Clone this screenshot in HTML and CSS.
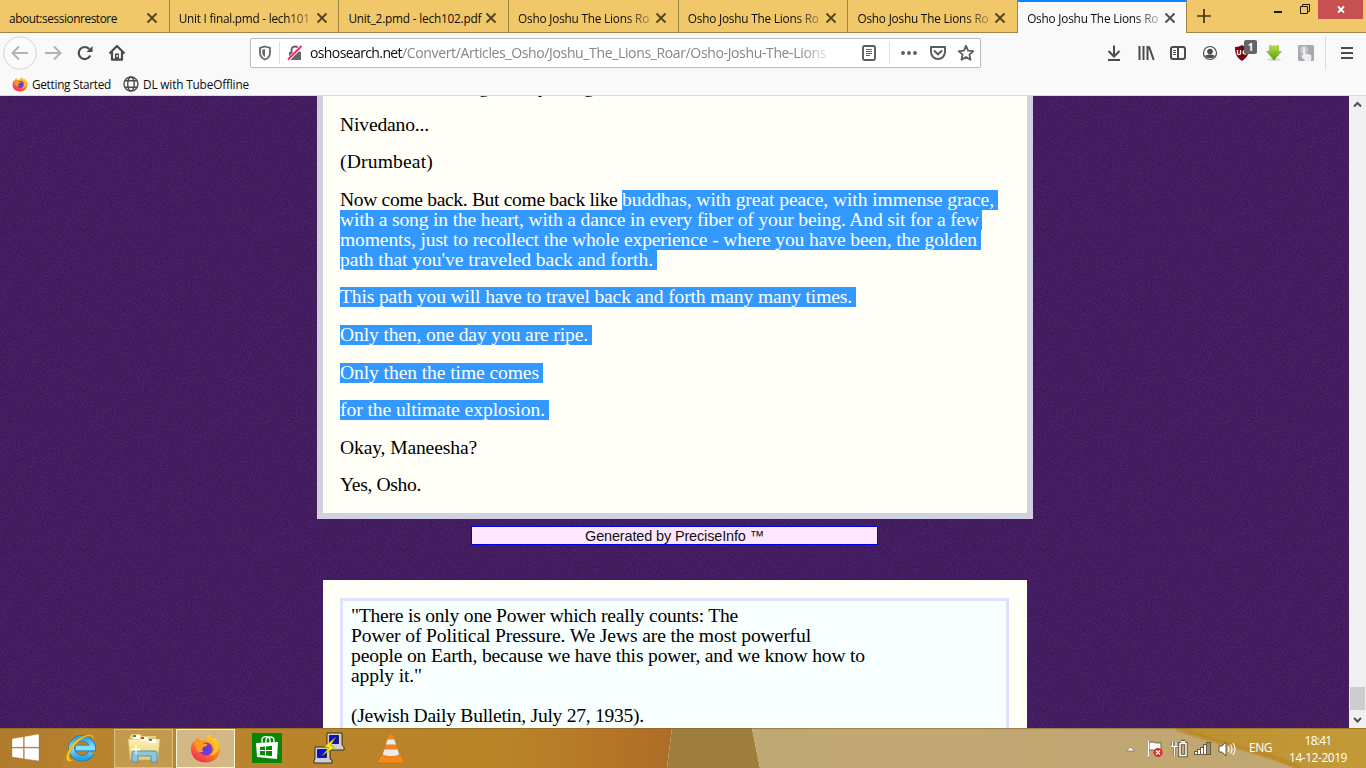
FILE: index.html
```html
<!DOCTYPE html>
<html lang="en">
<head>
<meta charset="utf-8">
<title>Osho Joshu The Lions Roar</title>
<link rel="stylesheet" href="styles.css">
</head>
<body>
<svg class="defs" width="0" height="0">
  <defs>
    <linearGradient id="ff" x1="0.8" y1="0" x2="0.2" y2="1"><stop offset="0" stop-color="#ffe52e"/><stop offset=".45" stop-color="#ff8a1c"/><stop offset="1" stop-color="#f0245c"/></linearGradient>
    <radialGradient id="globe"><stop offset="0" stop-color="#5a3fd8"/><stop offset="1" stop-color="#8a35c8"/></radialGradient>
    <linearGradient id="ie" x1="0" y1="0" x2="0" y2="1"><stop offset="0" stop-color="#2fa4e4"/><stop offset=".5" stop-color="#8fe4ff"/><stop offset="1" stop-color="#2b9ee0"/></linearGradient>
    <linearGradient id="folder" x1="0" y1="0" x2="0" y2="1"><stop offset="0" stop-color="#fdf3b4"/><stop offset="1" stop-color="#e6cd74"/></linearGradient>
    <linearGradient id="green" x1="0" y1="0" x2="0" y2="1"><stop offset="0" stop-color="#b4e04a"/><stop offset="1" stop-color="#5c9a10"/></linearGradient>
    <symbol id="x" viewBox="0 0 16 16"><path d="M3.5 3.5l9 9M12.500 3.500l-9 9" stroke="currentColor" stroke-width="1.800" fill="none"/></symbol>
    <symbol id="firefox" viewBox="0 0 32 32">
      <path d="M20 1c0 3 2 4 4 6 1-1 1-2 1-2 4 3 6 8 6 12 0 8-6 14-15 14S1 25 1 17c0-4 2-7 3-9 0 1 0 2 1 2 1-3 2-5 4-6 0 3 1 4 3 4 3-1 6-2 8-7z" fill="url(#ff)"/>
      <circle cx="16.500" cy="17" r="6.800" fill="url(#globe)"/>
      <path d="M5 11c3-2 6-2 8 0l5 1c-1 3-4 2-5 4-1 2 0 3 1 4-4 1-8-1-8-5z" fill="#ff9a20"/>
      <path d="M20 1c0 5 5 7 5 13 1 5-2 8-5 9 6 1 10-4 9-9-1-4-3-4-5-6-2-2-4-4-4-7z" fill="#ffc428"/>
    </symbol>
  </defs>
</svg>

<header class="tabs">
  <div class="tab"><span class="tab-title"><span data-w="108">about:sessionrestore</span></span><svg class="close"><use href="#x"/></svg></div>
  <div class="tab"><span class="tab-title fade"><span data-w="131">Unit I final.pmd - lech101</span></span><svg class="close"><use href="#x"/></svg></div>
  <div class="tab"><span class="tab-title"><span data-w="133">Unit_2.pmd - lech102.pdf</span></span><svg class="close"><use href="#x"/></svg></div>
  <div class="tab"><span class="tab-title fade"><span data-w="131">Osho Joshu The Lions Ro</span></span><svg class="close"><use href="#x"/></svg></div>
  <div class="tab"><span class="tab-title fade"><span data-w="131">Osho Joshu The Lions Ro</span></span><svg class="close"><use href="#x"/></svg></div>
  <div class="tab"><span class="tab-title fade"><span data-w="131">Osho Joshu The Lions Ro</span></span><svg class="close"><use href="#x"/></svg></div>
  <div class="tab active"><span class="tab-title fade"><span data-w="131">Osho Joshu The Lions Ro</span></span><svg class="close"><use href="#x"/></svg></div>
  <svg class="plus" width="34" height="32"><path d="M17 9v14M10 16h14" stroke="#40351c" stroke-width="1.700"/></svg>
  <div class="window-controls">
    <svg width="32" height="19"><path d="M12 12h8" stroke="#1c1710" stroke-width="2"/></svg>
    <svg width="24" height="19"><path d="M6.500 6.500h7v7h-7zM8.500 6V4.500h7v7H14" fill="none" stroke="#1c1710"/></svg>
    <span class="win-close"><svg width="45" height="19"><path d="M20 6.500l6 6M26 6.500l-6 6" stroke="#fff" stroke-width="1.800"/></svg></span>
  </div>
</header>

<nav class="toolbar">
  <svg class="back" width="34" height="34" viewBox="0 0 34 34"><circle cx="17" cy="17" r="16.300" fill="#fbfbfb" stroke="#d3d3d4"/><path d="M25 17H10M16 10.500L9.500 17l6.500 6.500" fill="none" stroke="#b3b3b5" stroke-width="2"/></svg>
  <svg class="btn" viewBox="0 0 32 32"><path d="M8 16h15M17 9.500l6.500 6.500-6.500 6.500" fill="none" stroke="#b3b3b5" stroke-width="2"/></svg>
  <svg class="btn" viewBox="0 0 32 32"><path d="M21.200 18.500a6 6 0 1 1-1-6.500" fill="none" stroke="#4a4a4f" stroke-width="2.200"/><path d="M23.500 9v6h-6z" fill="#4a4a4f"/></svg>
  <svg class="btn" viewBox="0 0 32 32"><path d="M8.500 16.500L16 9l7.500 7.500M11 15v7.700h10V15" fill="none" stroke="#4a4a4f" stroke-width="2.200" stroke-linejoin="round"/><path d="M14 16.500h4V23h-4z" fill="#4a4a4f"/><path d="M15.500 18h1.500v2h-1.500z" fill="#fff"/></svg>
  <div class="urlbar">
    <svg class="shield" width="16" height="18" viewBox="0 0 16 18"><path d="M8 2.500l5 1.500v5c0 3-2.500 5.500-5 6.500-2.500-1-5-3.500-5-6.500V4z" fill="none" stroke="#66666a" stroke-width="1.800"/><path d="M8 5v8C6 12 5.300 10 5.300 9V5.700z" fill="#66666a"/></svg>
    <i class="rule"></i>
    <svg class="lock" width="16" height="16" viewBox="0 0 16 16"><path d="M2 7h12v8H2z" fill="#66666a"/><path d="M4.500 8V5a3.500 3.500 0 0 1 7 0v3" fill="none" stroke="#66666a" stroke-width="2"/><path d="M1 15L14.500 1" stroke="#fff" stroke-width="3.400"/><path d="M1 14.500L14.500 1" stroke="#ff2256" stroke-width="1.800"/></svg>
    <span class="url"><span data-w="92" class="host">oshosearch.net</span><span data-w="424">/Convert/Articles_Osho/Joshu_The_Lions_Roar/Osho-Joshu-The-Lions</span></span>
    <svg class="reader" width="16" height="18" viewBox="0 0 16 18"><rect x="2" y="2" width="12" height="14" rx="1.500" fill="none" stroke="#5c5c61" stroke-width="1.900"/><path d="M5 5.500h6M5 7.500h6M5 9.500h6M5 11.500h4" stroke="#5c5c61"/></svg>
    <i class="rule"></i>
    <svg class="dots" width="18" height="16"><g fill="#5c5c61"><circle cx="3" cy="8" r="1.900"/><circle cx="9" cy="8" r="1.900"/><circle cx="15" cy="8" r="1.900"/></g></svg>
    <svg class="pocket" width="18" height="16" viewBox="0 0 18 16"><path d="M2 2h14v5a7 7 0 0 1-14 0z" fill="none" stroke="#5c5c61" stroke-width="2" stroke-linejoin="round"/><path d="M5.500 6L9 9.300 12.500 6" fill="none" stroke="#5c5c61" stroke-width="2" stroke-linecap="round"/></svg>
    <svg class="star" width="18" height="18" viewBox="0 0 18 18"><path d="M9 1.800l2.100 4.800 5.200.5-3.900 3.500 1.100 5.200L9 13.100l-4.500 2.700 1.100-5.200-3.900-3.500 5.200-.5z" fill="none" stroke="#5c5c61" stroke-width="1.800" stroke-linejoin="round"/></svg>
  </div>
  <div class="actions">
    <svg class="btn" viewBox="0 0 32 32"><path d="M16 8.500v10.500M10.500 14l5.500 5.500 5.500-5.500M10 23h12" fill="none" stroke="#4a4a4f" stroke-width="2"/></svg>
    <svg class="btn" viewBox="0 0 32 32"><path d="M9.500 9v14M13.500 9v14M17.500 9v14M19 9.500l4.700 13.500" fill="none" stroke="#4a4a4f" stroke-width="2"/></svg>
    <svg class="btn" viewBox="0 0 32 32"><rect x="9" y="10" width="14" height="12" rx="2" fill="none" stroke="#4a4a4f" stroke-width="2"/><path d="M16 10v12" stroke="#4a4a4f" stroke-width="2"/><path d="M11 13.500h3M11 15.500h3M11 17.500h3" stroke="#4a4a4f"/></svg>
    <svg class="btn" viewBox="0 0 32 32"><circle cx="16" cy="16" r="6.500" fill="none" stroke="#4a4a4f" stroke-width="1.200"/><circle cx="16" cy="14.500" r="2.800" fill="#4a4a4f"/><path d="M11 19c2-2 8-2 10 0-2 3-8 3-10 0z" fill="#4a4a4f"/></svg>
    <div class="ublock"><svg class="btn" viewBox="0 0 32 32"><path d="M16 8c2 1.500 5 2 7 2 0 6-1 10-7 14-6-4-7-8-7-14 2 0 5-.5 7-2z" fill="#800010"/><path d="M11.500 13v3.500c0 1.500 3 1.500 3 0V13M20 13.500c-3-1-4.500 4 0 3.500" fill="none" stroke="#fff" stroke-width="1.300"/></svg><b class="badge">1</b></div>
    <svg class="btn" viewBox="0 0 32 32"><ellipse cx="16" cy="22.500" rx="7" ry="1.500" fill="#d5dccb"/><path d="M11 8h2.500l.8 1.500L15 8h2l.7 1.500.8-1.500H21v6h3l-8 9.500L8 14h3z" fill="url(#green)"/></svg>
    <svg class="btn" viewBox="0 0 32 32"><rect x="8" y="8" width="16" height="16" rx="1.500" fill="#a9a9a9"/><circle cx="14" cy="13" r="4" fill="#c8c8c8"/><path d="M13 10.500c1.500-1 2 0 2 1v5l5 1c2 1 1.500 4 1 6.500h-6l-4-5c0-1 2-1 2 0z" fill="#e9eff4"/></svg>
  </div>
  <i class="rule tall"></i>
  <svg class="menu" width="14" height="16"><path d="M1 3h12M1 8h12M1 13h12" stroke="#4a4a4f" stroke-width="2"/></svg>
</nav>

<div class="bookmarks">
  <svg class="bm-fox" width="16" height="16"><use href="#firefox"/></svg><span data-w="79">Getting Started</span>
  <svg class="bm-globe" width="16" height="16" viewBox="0 0 16 16"><g fill="none" stroke="#4a4a4f" stroke-width="1.400"><circle cx="8" cy="8" r="7"/><ellipse cx="8" cy="8" rx="3.300" ry="7"/><path d="M2 4.800h12M2 11.200h12"/></g></svg><span data-w="106">DL with TubeOffline</span>
</div>

<main class="viewport">
  <div class="page">
    <svg class="noise" width="1349" height="632"><filter id="grain" x="0" y="0" width="100%" height="100%" color-interpolation-filters="sRGB"><feTurbulence type="fractalNoise" baseFrequency=".8" numOctaves="2" seed="4"/><feColorMatrix values=".16 .06 0 0 .157  .08 .05 0 0 .048  .14 .05 .08 0 .243  0 0 0 0 1"/></filter><rect width="100%" height="100%" filter="url(#grain)"/></svg>
    <article class="article">
      <p class="cut"><span>g</span><span>y</span><span>g</span></p>
      <p><span data-w="89">Nivedano...</span></p>
      <p><span data-w="93">(Drumbeat)</span></p>
      <p><span data-w="282">Now come back. But come back like </span><mark data-w="372">buddhas, with great peace, with immense grace,</mark><br>
      <mark class="tight" data-w="639">with a song in the heart, with a dance in every fiber of your being. And sit for a few</mark><br>
      <mark data-w="637">moments, just to recollect the whole experience - where you have been, the golden</mark><br>
      <mark data-w="313">path that you've traveled back and forth.</mark></p>
      <p><mark data-w="512">This path you will have to travel back and forth many many times.</mark></p>
      <p><mark data-w="248">Only then, one day you are ripe.</mark></p>
      <p><mark data-w="199">Only then the time comes</mark></p>
      <p><mark data-w="205">for the ultimate explosion.</mark></p>
      <p><span data-w="137">Okay, Maneesha?</span></p>
      <p><span data-w="81">Yes, Osho.</span></p>
    </article>
    <div class="generated"><span data-w="179">Generated by PreciseInfo ™</span></div>
    <section class="quote-card">
      <div class="quote">
        <span data-w="387">"There is only one Power which really counts: The</span><br>
        <span data-w="460">Power of Political Pressure. We Jews are the most powerful</span><br>
        <span data-w="514">people on Earth, because we have this power, and we know how to</span><br>
        <span data-w="71">apply it."</span><br><br>
        <span data-w="293">(Jewish Daily Bulletin, July 27, 1935).</span>
      </div>
    </section>
  </div>
  <div class="scrollbar">
    <svg width="17" height="17"><path d="M5 10.500l3.500-3.500 3.500 3.500" fill="none" stroke="#505050" stroke-width="2"/></svg>
    <i class="thumb"></i>
    <svg width="17" height="17"><path d="M5 7l3.500 3.500L12 7" fill="none" stroke="#505050" stroke-width="2"/></svg>
  </div>
</main>

<footer class="taskbar">
  <svg class="wallpaper" width="1366" height="40">
    <defs>
      <linearGradient id="w1"><stop offset="0" stop-color="#b47f2c"/><stop offset=".09" stop-color="#b9842e"/><stop offset=".75" stop-color="#b98428"/><stop offset=".86" stop-color="#b77a27"/><stop offset="1" stop-color="#ae6d27"/></linearGradient>
      <linearGradient id="w2"><stop offset="0" stop-color="#c0a875"/><stop offset="1" stop-color="#c1a670"/></linearGradient>
      <linearGradient id="w3"><stop offset="0" stop-color="#bd9030"/><stop offset="1" stop-color="#c39a39"/></linearGradient>
    </defs>
    <path d="M0 0h672l-5 40H0z" fill="url(#w1)"/>
    <path d="M0 0h74L60 40H0z" fill="#a9752a" opacity=".35"/>
    <path d="M672 0h80l8 40h-93z" fill="#9d7e3c"/>
    <path d="M752 0h614v40H760z" fill="url(#w2)"/>
    <path d="M1176 0h190v40h-72c-28-15-72-23-118-40z" fill="url(#w3)"/>
    <path d="M1176 0c40 16 92 24 124 40" fill="none" stroke="#b9851f" stroke-width="5" opacity=".6"/>
    <path d="M0 .5h1366" stroke="#806020" opacity=".5"/>
  </svg>
  <div class="apps">
    <svg class="start" width="28" height="28" viewBox="0 0 28 28"><path d="M0 4.500L11.500 2.700v10.600H0zM12.300 2.600L27 0v13.300H12.300zM0 14.100h11.500v10.700L0 23zM12.300 14.100H27V27l-14.700-2.100z" fill="#fff" stroke="#9a7434" stroke-width=".4"/></svg>
    <svg class="ie" width="32" height="32" viewBox="0 0 32 32"><path d="M26.500 20.500A10.500 10 0 1 1 27.500 16H11" fill="none" stroke="#1e79bb" stroke-width="6.500"/><path d="M26.500 20.500A10.500 10 0 1 1 27.500 16H11" fill="none" stroke="url(#ie)" stroke-width="5"/><path d="M28.500 8C31-1 15 2 7 13S-1 33 9 28C0 29 5 18 12 11S27 1 28.500 8z" fill="#fbc81f" stroke="#c98a10" stroke-width=".5"/></svg>
    <div class="task"><svg width="34" height="32" viewBox="0 0 34 32"><path d="M3 4l2-2h8l2 2h14v20H3z" fill="#e9d287"/><path d="M1 7h32l-2 21H3z" fill="url(#folder)" stroke="#c2a44b" stroke-width=".6"/><path d="M6 3h7v4H6zM14 5h7v4h-7zM22 7h7v4h-7z" fill="#fff"/><path d="M6 3h3v2H6z" fill="#18a83c"/><path d="M14 5h3v2h-3z" fill="#d8402c"/><path d="M22 7h3v2h-3z" fill="#3088d8"/><path d="M6 19h22q2 0 2 2v9h-6v-6H11v6H5v-9q0-2 1-2z" fill="#8cc4dc" stroke="#5291b0"/><path d="M9 13v9M4.500 17.500h9" stroke="#fff" stroke-width="1.300"/></svg></div>
    <div class="task current"><svg width="31" height="32"><use href="#firefox"/></svg></div>
    <svg class="store" width="30" height="30" viewBox="0 0 30 30"><path d="M0 0h30v30H0z" fill="#078607"/><path d="M4 10l22-1-1 17-20-2z" fill="#fff"/><path d="M10 12V7c0-5 8-4 8 0v4M14 11V7c0-4 8-4 8 0v4" fill="none" stroke="#fff" stroke-width="1.300"/><path d="M8 14l5-.5V17H8zM14 13.400l6-.6V17h-6zM8 18h5v4.500l-5-.5zM14 18h6v5l-6-.5z" fill="#078607"/></svg>
    <svg class="putty" width="32" height="32" viewBox="0 0 32 32"><g stroke="#111" stroke-width=".8"><path d="M14 1h15v12l2 2v3H15l-1-4z" fill="#cfcfcf"/><path d="M16.500 3.500h9v8h-9z" fill="#1010c8"/><path d="M2 15h15v12l2 1v3H1v-3l1-1z" fill="#cfcfcf"/><path d="M4.500 17.500h9v8h-9z" fill="#1010c8"/></g><path d="M22.500 5.500L11.500 14.500l4.500 1.500-7 7.500L21.500 15.500 17.500 13.500z" fill="#fff200" stroke="#8d8800" stroke-width=".5"/></svg>
    <svg class="vlc" width="28" height="32" viewBox="0 0 28 32"><path d="M4 23h20l3 6v2H1v-2z" fill="#f28a1c" stroke="#c96410" stroke-width=".6"/><path d="M12 3q2-2 4 0l7 22q-9 4-18 0z" fill="#f58220"/><path d="M10.600 7.500h6.800l1.600 5H9zM7.300 17.500h13.400l1.500 5q-8 3-16.400 0z" fill="#e9ecec"/></svg>
  </div>
  <div class="tray">
    <svg width="24" height="24"><path d="M7.500 14L11.500 10l4 4z" fill="#fff" stroke="#766b57" stroke-width=".7"/></svg>
    <svg width="24" height="24"><path d="M5.500 4v17M6 5.500c5-2 6 2 12 0v8c-6 2-7-2-12 0z" fill="#fff" stroke="#6f6044"/><path d="M5.500 4v16" stroke="#fff"/><circle cx="15" cy="15.500" r="4.600" fill="#d92c30"/><path d="M13 13.500l4 4M17 13.500l-4 4" stroke="#fff" stroke-width="1.400"/></svg>
    <svg width="24" height="24"><path d="M13 6.500h6v12h-6zM14 4.500h4" fill="none" stroke="#65583f" stroke-width="3.500"/><path d="M13 6.500h6v12h-6zM14 4.800h4" fill="none" stroke="#fff" stroke-width="1.500"/><path d="M5.500 5v4M9 5v4M4 9.500h7M7.500 10v9" stroke="#65583f" stroke-width="3"/><path d="M5.500 5v4M9 5v4M4 9.500h7M7.500 10v9" stroke="#fff" stroke-width="1.500"/></svg>
    <svg width="24" height="24"><path d="M3 14h3v-2h3v-2h3V7h3V5h5v13H3z" fill="#65583f"/><g fill="#fff"><path d="M4 15h2v2H4zM7 13h2v4H7zM10 11h2v6h-2zM13 8h2v9h-2z"/></g><path d="M16 6h3v11h-3z" fill="#9b927e"/></svg>
    <svg width="24" height="24"><path d="M4 9h3l4-4v14l-4-4H4z" fill="#fff" stroke="#65583f"/><path d="M13 9q2 3 0 6M15.500 7.500q3 4.500 0 9M18 6q4 6 0 12" fill="none" stroke="#fff" stroke-width="1.100"/></svg>
    <span class="lang" data-w="23">ENG</span>
    <div class="clock"><span data-w="27">18:41</span><span data-w="58">14-12-2019</span></div>
  </div>
</footer>
<script src="fit.js"></script>
</body>
</html>
```
FILE: styles.css
```css
* { box-sizing: border-box; }
body { margin: 0; width: 1366px; height: 768px; overflow: hidden; display: flex; flex-direction: column; font: 12px/16px "Open Sans", "Noto Sans", sans-serif; color: #0c0c0d; }
svg { display: block; flex: none; }
.defs { position: absolute; }
[data-w] { white-space: pre; display: inline-block; }

.tabs { height: 33px; flex: none; display: flex; background: #f0c869; border-bottom: 1px solid #a08543; }
.tab { width: 169.7px; flex: none; height: 32px; display: flex; align-items: center; padding: 3px 9px 0; border-right: 1px solid #a08543; }
.tab.active { width: 169px; height: 33px; background: #f9f9fa; border-top: 2px solid #0a84ff; padding-top: 1px; }
.tab-title { width: 135px; flex: none; overflow: hidden; font-size: 11.8px; }
.fade { -webkit-mask-image: linear-gradient(90deg, #000 108px, #0003 135px); mask-image: linear-gradient(90deg, #000 108px, #0003 135px); }
.close { width: 16px; height: 16px; color: #4f4222; }
.tab.active .close { color: #4a4a4f; }
.window-controls { margin-left: auto; display: flex; padding-right: 3px; height: 19px; }
.win-close { background: #c75050; }

.toolbar { height: 40px; flex: none; display: flex; align-items: center; background: #f9f9fa; padding-left: 3px; }
.btn { width: 32px; height: 32px; }
.urlbar { width: 731px; height: 30px; margin-left: 117px; display: flex; align-items: center; background: #fff; border: 1px solid #bcbcbd; border-radius: 2px; box-shadow: 0 1px 3px #0000000a; padding-left: 6px; }
.rule { width: 1px; height: 22px; background: #dededf; flex: none; }
.shield { margin-right: 6px; }
.lock { margin: 0 7px; }
.url { width: 518px; flex: none; overflow: hidden; display: flex; font-size: 14px; line-height: 20px; color: #85858a; -webkit-mask-image: linear-gradient(90deg, #000 490px, #0003 518px); mask-image: linear-gradient(90deg, #000 490px, #0003 518px); }
.host { color: #0c0c0d; }
.reader { margin: 0 12px 0 33px; }
.dots { margin-left: 10px; }
.pocket { margin-left: 11px; }
.star { margin-left: 10px; }
.actions { display: flex; margin-left: 117px; }
.ublock { position: relative; }
.badge { position: absolute; left: 18px; top: 3px; width: 13px; height: 14px; border-radius: 2px; background: #646468; color: #fff; font-size: 10px; line-height: 14px; text-align: center; }
.tall { height: 34px; margin-left: 3px; }
.menu { margin-left: 14px; }

.bookmarks { height: 23px; flex: none; display: flex; align-items: center; padding: 0 0 0 12px; background: #f9f9fa; border-bottom: 1px solid #dcdcdc; font-size: 11.8px; }
.bm-fox { margin-right: 4px; }
.bm-globe { margin: 0 4px 0 12px; }

.viewport { height: 632px; flex: none; display: flex; overflow: hidden; }
.page { position: relative; width: 1349px; height: 632px; overflow: hidden; background: #451c63; font-family: "Liberation Serif", serif; font-size: 19.6px; line-height: 20px; color: #000; }
.noise { position: absolute; inset: 0; }
.article, .generated, .quote-card { position: relative; margin-left: auto; margin-right: auto; }
.article { width: 716px; height: 423px; left: .5px; border: 6px solid #d0d0e0; border-top: 0; background: #fffff8; padding: 0 17px; overflow: hidden; }
.article p { margin: 0 0 17.55px; height: 20px; white-space: nowrap; }
.article p:nth-child(4) { height: 80px; }
.article .cut { margin-top: -18.75px; padding-left: 139px; display: flex; }
.cut span { width: 54px; }
.cut span:nth-child(2) { width: 51px; padding-left: 5px; }
mark { height: 20px; vertical-align: top; box-sizing: content-box; background: #39f; color: #fff; padding-right: 4px; }
.tight { padding-right: 3px; }
p span, .quote span { vertical-align: top; }
.generated { width: 407px; height: 19px; margin-top: 7px; border: 1px solid #0000e8; background: #ffe8ff; font: 14.5px/18px "Liberation Sans", sans-serif; text-align: center; color: #111; }
.quote-card { width: 704px; height: 148px; margin-top: 35px; left: .5px; background: #fffff8; padding: 18px 18px 0 17px; }
.quote { height: 200px; border: 3px solid #e0e0ff; background: #f8ffff; padding: 5px 8px; white-space: nowrap; }
.scrollbar { width: 17px; display: flex; flex-direction: column; background: #f0f0f0; }
.thumb { width: 15px; height: 23px; margin: auto 1px 1px; background: #cdcdcd; }

.taskbar { position: relative; height: 40px; flex: none; display: flex; justify-content: space-between; color: #fff; }
.wallpaper { position: absolute; inset: 0; }
.apps, .tray { position: relative; display: flex; align-items: center; height: 40px; }
.start { margin-left: 12px; }
.ie { margin: 0 17px 0 25px; }
.task { width: 59px; height: 39px; display: flex; align-items: center; justify-content: center; border: 1px solid #d8bd88; background: #c9a76699; margin-right: 3px; }
.task.current { border-color: #fff2d4; background: #d3b886; margin-right: 17px; }
.putty { margin: 0 32px 0 31px; }
.tray { padding-right: 18px; }
.tray > svg { margin-top: 1px; }
.lang { margin-left: 10px; }
.clock { width: 60px; margin-left: 16px; display: flex; flex-direction: column; align-items: center; line-height: 17px; padding-top: 1px; }
```
FILE: fit.js
```js
document.querySelectorAll('[data-w]').forEach(function (el) {
  var range = document.createRange();
  range.selectNodeContents(el);
  var natural = range.getBoundingClientRect().width;
  el.style.letterSpacing = (el.dataset.w - natural) / el.textContent.length + 'px';
});
```
